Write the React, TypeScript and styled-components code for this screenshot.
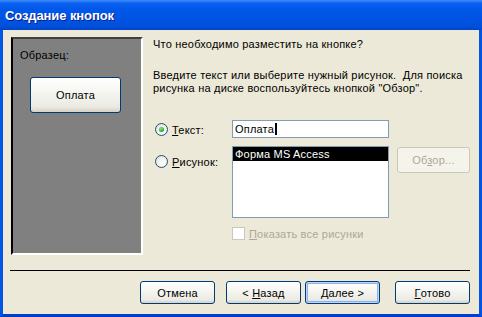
import styled, { createGlobalStyle } from "styled-components";

const GlobalStyle = createGlobalStyle`
  html, body {
    margin: 0;
    padding: 0;
    background: #ece9d8;
  }
  * {
    box-sizing: border-box;
  }
`;

const Window = styled.div`
  width: 482px;
  height: 317px;
  display: flex;
  flex-direction: column;
  font-family: "Liberation Sans", Arial, sans-serif;
  font-size: 11px;
  letter-spacing: 0.2px;
  color: #000;
  background: #ece9d8;
`;

const TitleBar = styled.div`
  height: 30px;
  flex: none;
  display: flex;
  align-items: center;
  padding: 0 5px;
  background: linear-gradient(
    to bottom,
    #3c8cf8 0%,
    #0a5ff0 12%,
    #0058ea 30%,
    #0054e3 60%,
    #0050da 88%,
    #0043c8 100%
  );
`;

const Title = styled.span`
  color: #fff;
  font-weight: bold;
  font-size: 13px;
  letter-spacing: -0.1px;
  text-shadow: 1px 1px 0 #0a1f8a;
  margin-top: 1px;
`;

const Body = styled.div`
  flex: 1;
  display: flex;
  flex-direction: column;
  border-left: 3px solid #0055e5;
  border-right: 3px solid #0055e5;
  border-bottom: 3px solid #0040c8;
  padding: 7px 9px 10px 7px;
`;

const Main = styled.div`
  display: flex;
  height: 218px;
  gap: 10px;
`;

const SamplePanel = styled.div`
  flex: none;
  width: 132px;
  margin-left: 1px;
  background: #808080;
  border-top: 2px solid #404040;
  border-left: 2px solid #000;
  border-right: 2px solid #fff;
  border-bottom: 2px solid #fff;
  display: flex;
  flex-direction: column;
  padding: 10px 0 0 7px;
`;

const SampleLabel = styled.div`
  line-height: 13px;
`;

const XpButton = styled.button<{ $default?: boolean; $disabled?: boolean }>`
  width: 75px;
  height: 23px;
  font-family: inherit;
  font-size: 11px;
  letter-spacing: 0.2px;
  color: ${(p) => (p.$disabled ? "#aca899" : "#000")};
  border: 1px solid ${(p) => (p.$disabled ? "#cac8bb" : "#003c74")};
  border-radius: 3px;
  padding: 0;
  background: ${(p) =>
    p.$disabled
      ? "#f5f4ea"
      : "linear-gradient(to bottom, #ffffff 0%, #f6f6f2 40%, #ebeae3 85%, #d6d0c5 100%)"};
  box-shadow: ${(p) =>
    p.$default
      ? "inset 0 0 0 1px #c2d4f7, inset 0 0 0 2px #8eb2ee"
      : "none"};
  display: flex;
  align-items: center;
  justify-content: center;
  white-space: pre;
`;

const SampleButton = styled(XpButton)`
  width: 91px;
  height: 36px;
  margin: 15px 0 0 10px;
`;

const Content = styled.div`
  flex: 1;
  min-width: 0;
  display: flex;
  flex-direction: column;
  padding-top: 1px;
`;

const Question = styled.div`
  line-height: 13px;
`;

const Hint = styled.div`
  line-height: 12.5px;
  margin-top: 18px;
  white-space: nowrap;
`;

const Options = styled.div`
  display: grid;
  grid-template-columns: 77px 157px 81px;
  grid-template-rows: 18px 72px auto;
  row-gap: 8px;
  margin: 26px 0 0 2px;
`;

const OptionLabel = styled.label<{ $top?: number }>`
  display: flex;
  align-items: center;
  gap: 4px;
  align-self: start;
  margin-top: ${(p) => p.$top ?? 0}px;
  height: 13px;
`;

const Radio = styled.span<{ $checked?: boolean }>`
  flex: none;
  width: 13px;
  height: 13px;
  border-radius: 50%;
  border: 1px solid #1c5180;
  background: radial-gradient(circle at 60% 65%, #ffffff 0%, #f0efe8 50%, #dcd9cf 100%);
  display: flex;
  align-items: center;
  justify-content: center;
  &::after {
    content: "";
    display: ${(p) => (p.$checked ? "block" : "none")};
    width: 5px;
    height: 5px;
    border-radius: 50%;
    background: radial-gradient(circle at 40% 35%, #8ee88c 0%, #21a121 70%);
  }
`;

const Key = styled.span`
  text-decoration: underline;
  text-underline-offset: 1px;
`;

const TextInput = styled.div`
  border: 1px solid #7f9db9;
  background: #fff;
  display: flex;
  align-items: center;
  padding-left: 2px;
`;

const Caret = styled.span`
  width: 2px;
  height: 12px;
  background: #000;
  margin-left: 1px;
`;

const ListBox = styled.div`
  border: 1px solid #7f9db9;
  background: #fff;
`;

const ListItem = styled.div<{ $selected?: boolean }>`
  height: 14px;
  line-height: 14px;
  padding-left: 2px;
  background: ${(p) => (p.$selected ? "#000" : "transparent")};
  color: ${(p) => (p.$selected ? "#fff" : "#000")};
`;

const BrowseButton = styled(XpButton)`
  justify-self: end;
  width: 73px;
  height: 26px;
  margin-top: 1px;
`;

const CheckRow = styled.label`
  grid-column: 2 / span 2;
  display: flex;
  align-items: center;
  gap: 4px;
  color: #aca899;
  margin-top: 1px;
`;

const CheckBox = styled.span`
  width: 13px;
  height: 13px;
  border: 1px solid #cac8bb;
  background: #fff;
`;

const Separator = styled.div`
  height: 1px;
  background: #000;
  margin-top: 15px;
`;

const ButtonRow = styled.div`
  display: flex;
  justify-content: flex-end;
  margin-top: 10px;
`;

const Gap = styled.span<{ $w: number }>`
  width: ${(p) => p.$w}px;
`;

export default function App() {
  return (
    <>
      <GlobalStyle />
      <Window>
        <TitleBar>
          <Title>Создание кнопок</Title>
        </TitleBar>
        <Body>
          <Main>
            <SamplePanel>
              <SampleLabel>Образец:</SampleLabel>
              <SampleButton>Оплата</SampleButton>
            </SamplePanel>
            <Content>
              <Question>Что необходимо разместить на кнопке?</Question>
              <Hint>
                Введите текст или выберите нужный рисунок.&nbsp; Для поиска
                <br />
                рисунка на диске воспользуйтесь кнопкой "Обзор".
              </Hint>
              <Options>
                <OptionLabel $top={3}>
                  <Radio $checked />
                  <span>
                    <Key>Т</Key>екст:
                  </span>
                </OptionLabel>
                <TextInput>
                  Оплата
                  <Caret />
                </TextInput>
                <span />
                <OptionLabel $top={9}>
                  <Radio />
                  <span>
                    <Key>Р</Key>исунок:
                  </span>
                </OptionLabel>
                <ListBox>
                  <ListItem $selected>Форма MS Access</ListItem>
                </ListBox>
                <BrowseButton $disabled>
                  <span>
                    Об<Key>з</Key>ор...
                  </span>
                </BrowseButton>
                <span />
                <CheckRow>
                  <CheckBox />
                  <span>
                    <Key>П</Key>оказать все рисунки
                  </span>
                </CheckRow>
              </Options>
            </Content>
          </Main>
          <Separator />
          <ButtonRow>
            <XpButton>Отмена</XpButton>
            <Gap $w={11} />
            <XpButton>
              <span>
                &lt; <Key>Н</Key>азад
              </span>
            </XpButton>
            <Gap $w={4} />
            <XpButton $default>
              <span>
                <Key>Д</Key>алее &gt;
              </span>
            </XpButton>
            <Gap $w={15} />
            <XpButton>
              <Key>Г</Key>отово
            </XpButton>
          </ButtonRow>
        </Body>
      </Window>
    </>
  );
}
